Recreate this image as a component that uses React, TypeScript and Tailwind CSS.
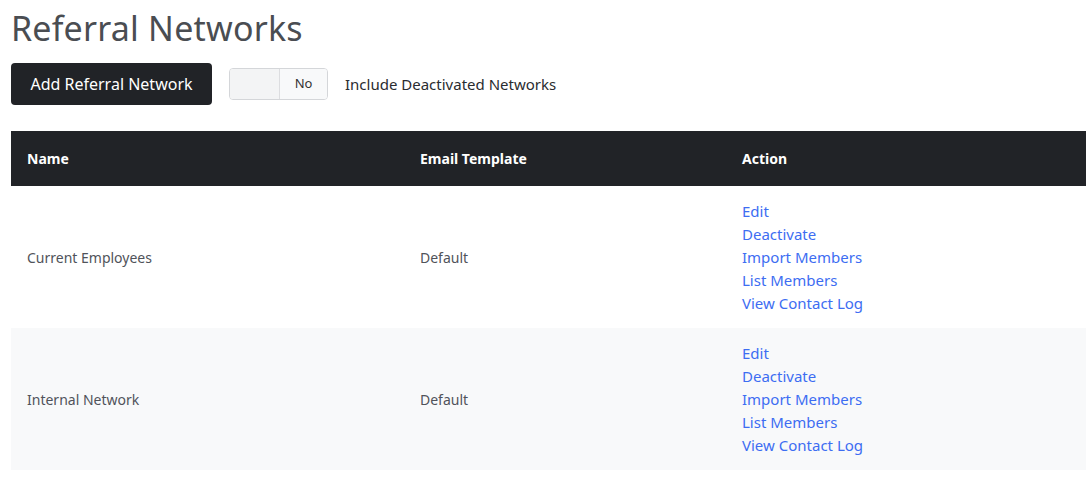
import React from "react";

const rows = ["Current Employees", "Internal Network"];
const links = ["Edit", "Deactivate", "Import Members", "List Members", "View Contact Log"];

export default function App() {
  return (
    <div className="bg-white w-[1092px] h-[482px] pl-[11px] pr-[6px]" style={{ fontFamily: '"Noto Sans", "Open Sans", sans-serif' }}>
      <h1 className="text-[34px] leading-[40px] pt-[8px] text-[#4a4d52] font-normal tracking-[0.2px]">Referral Networks</h1>
      <div className="flex items-center mt-[15px] h-[42px]">
        <button className="h-[42px] w-[201px] rounded bg-[#212327] text-white text-[16px]">Add Referral Network</button>
        <div className="ml-[17px] flex h-[32px] w-[99px] rounded border border-[#d4d6d9] overflow-hidden">
          <div className="w-[50px] bg-[#f3f4f5] border-r border-[#dcdde0]" />
          <div className="flex-1 flex items-center justify-center text-[13px] text-[#333] bg-[#f8f9fa]">No</div>
        </div>
        <span className="ml-[17px] text-[15px] text-[#2a2c30]">Include Deactivated Networks</span>
      </div>
      <div className="mt-[26px]">
        <div className="flex items-center h-[55px] bg-[#212327] text-white text-[14px] font-bold">
          <div className="w-[409px] pl-[16px]">Name</div>
          <div className="w-[322px]">Email Template</div>
          <div>Action</div>
        </div>
        {rows.map((r, i) => (
          <div key={r} className={`flex items-center h-[142px] text-[14px] text-[#50535a] ${i % 2 ? "bg-[#f8f9fa]" : "bg-white"}`}>
            <div className="w-[409px] pl-[16px]">{r}</div>
            <div className="w-[322px]">Default</div>
            <div className="flex flex-col text-[15px] leading-[23px] text-[#3d6df2]">
              {links.map((l) => (
                <a key={l} href="#">{l}</a>
              ))}
            </div>
          </div>
        ))}
      </div>
    </div>
  );
}
